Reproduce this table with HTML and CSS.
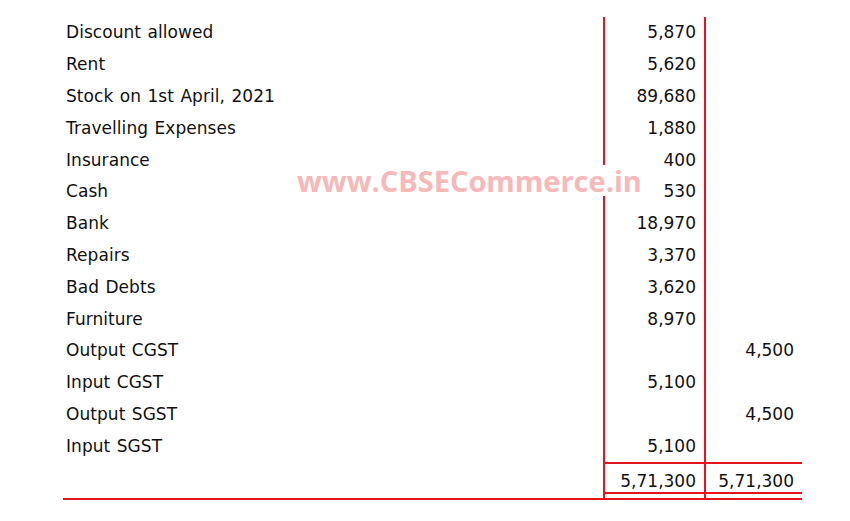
FILE: index.html
```
<!DOCTYPE html>
<html>
<head>
<meta charset="utf-8">
<link rel="stylesheet" href="styles.css">
</head>
<body>
<div class="page">
  <div class="sheet">
    <div class="lbl">Discount allowed</div><div class="num">5,870</div><div class="num"></div>
    <div class="lbl">Rent</div><div class="num">5,620</div><div class="num"></div>
    <div class="lbl">Stock on 1st April, 2021</div><div class="num">89,680</div><div class="num"></div>
    <div class="lbl">Travelling Expenses</div><div class="num">1,880</div><div class="num"></div>
    <div class="lbl">Insurance</div><div class="num">400</div><div class="num"></div>
    <div class="lbl">Cash</div><div class="num">530</div><div class="num"></div>
    <div class="lbl">Bank</div><div class="num">18,970</div><div class="num"></div>
    <div class="lbl">Repairs</div><div class="num">3,370</div><div class="num"></div>
    <div class="lbl">Bad Debts</div><div class="num">3,620</div><div class="num"></div>
    <div class="lbl">Furniture</div><div class="num">8,970</div><div class="num"></div>
    <div class="lbl">Output CGST</div><div class="num"></div><div class="num">4,500</div>
    <div class="lbl">Input CGST</div><div class="num">5,100</div><div class="num"></div>
    <div class="lbl">Output SGST</div><div class="num"></div><div class="num">4,500</div>
    <div class="lbl">Input SGST</div><div class="num">5,100</div><div class="num"></div>
    <div class="lbl tot"></div><div class="num tot">5,71,300</div><div class="num tot">5,71,300</div>
  </div>
  <div class="watermark">www.CBSECommerce.in</div>
</div>
</body>
</html>
```

FILE: styles.css
```
html, body {
  margin: 0;
  padding: 0;
  background: #ffffff;
}

.page {
  position: relative;
  width: 850px;
  height: 521px;
  padding-top: 17px;
  box-sizing: border-box;
}

.sheet {
  margin-left: 63px;
  width: 739px;
  display: grid;
  grid-template-columns: 540px 101px 98px;
  grid-auto-rows: 31.8px;
  font-family: "DejaVu Sans", sans-serif;
  font-size: 17px;
  color: #111111;
}

.sheet > div {
  display: flex;
  align-items: center;
  box-sizing: border-box;
  padding-bottom: 1px;
}

.lbl {
  padding-left: 3px;
  letter-spacing: 0.05px;
  word-spacing: 1px;
}

.num {
  justify-content: flex-end;
  padding-right: 8px;
  border-left: 2px solid #e3141c;
}

.sheet > .tot {
  height: 38px;
  align-items: flex-start;
  padding-top: 7px;
  border-bottom: 2px solid #e3141c;
}

.sheet > .num.tot {
  border-top: 2px solid #e3141c;
  position: relative;
}

.num.tot::after {
  content: "";
  position: absolute;
  left: 0;
  right: 0;
  bottom: 4px;
  border-bottom: 2px solid #e3141c;
}

.watermark {
  position: absolute;
  left: 290px;
  top: 165px;
  height: 31px;
  padding: 0 8px 0 7px;
  background: #ffffff;
  font-family: "Open Sans", sans-serif;
  font-weight: 700;
  font-size: 29px;
  line-height: 31px;
  color: #f6b8b8;
}
```
